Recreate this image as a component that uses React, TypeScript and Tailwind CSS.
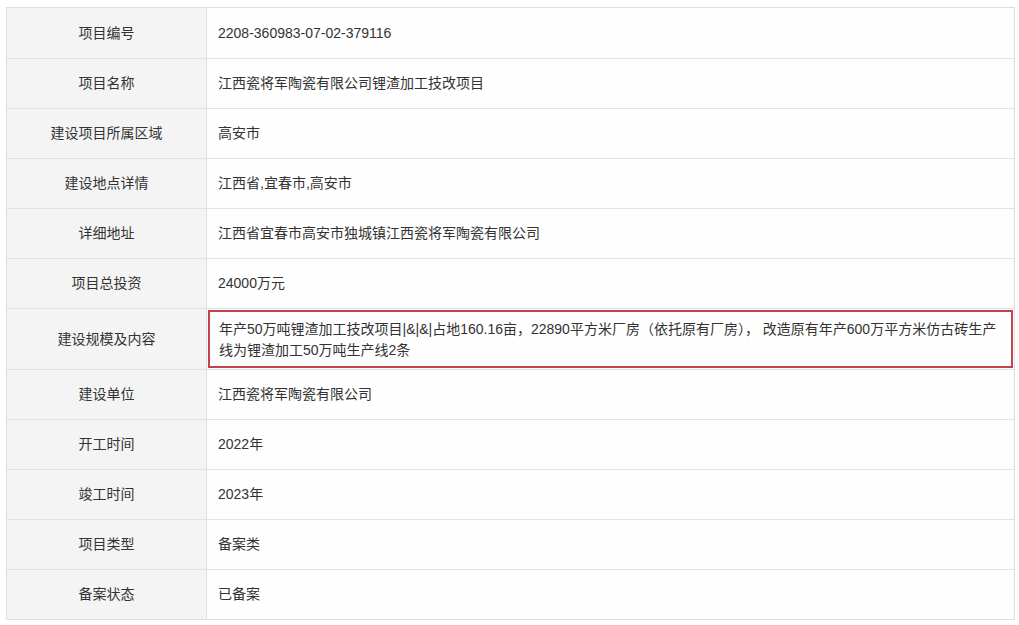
import React from 'react';

interface Row {
  label: string;
  value: string[];
  highlight?: boolean;
}

const rows: Row[] = [
  { label: '项目编号', value: ['2208-360983-07-02-379116'] },
  { label: '项目名称', value: ['江西瓷将军陶瓷有限公司锂渣加工技改项目'] },
  { label: '建设项目所属区域', value: ['高安市'] },
  { label: '建设地点详情', value: ['江西省,宜春市,高安市'] },
  { label: '详细地址', value: ['江西省宜春市高安市独城镇江西瓷将军陶瓷有限公司'] },
  { label: '项目总投资', value: ['24000万元'] },
  {
    label: '建设规模及内容',
    value: [
      '年产50万吨锂渣加工技改项目|&|&|占地160.16亩，22890平方米厂房（依托原有厂房）， 改造原有年产600万平方米仿古砖生产',
      '线为锂渣加工50万吨生产线2条',
    ],
    highlight: true,
  },
  { label: '建设单位', value: ['江西瓷将军陶瓷有限公司'] },
  { label: '开工时间', value: ['2022年'] },
  { label: '竣工时间', value: ['2023年'] },
  { label: '项目类型', value: ['备案类'] },
  { label: '备案状态', value: ['已备案'] },
];

const App: React.FC = () => {
  return (
    <div
      className="w-[1019px] h-[625px] bg-white pt-[7px] pl-[6px]"
      style={{ fontFamily: '"Liberation Sans", "Noto Sans CJK SC", sans-serif' }}
    >
      <div className="w-[1009px] border border-[#dedede] text-[14px] text-[#333]">
        {rows.map((row, i) => (
          <div
            key={row.label}
            className={`grid grid-cols-[200px_1fr] ${i > 0 ? 'border-t border-[#e3e3e3]' : ''} ${
              row.highlight ? 'h-[61px]' : 'h-[50px]'
            }`}
          >
            <div className="flex items-center justify-center bg-[#f4f4f4] border-r border-[#dedede]">
              {row.label}
            </div>
            {row.highlight ? (
              <div className="bg-[#fefefe] p-[1px]">
                <div className="h-full border-[2px] border-[#c0454b] pl-[9px] pr-[4px] pt-[7px] leading-[21px] whitespace-nowrap">
                  {row.value.map((line) => (
                    <div key={line}>{line}</div>
                  ))}
                </div>
              </div>
            ) : (
              <div className="flex items-center pl-[11px] bg-[#fefefe]">{row.value[0]}</div>
            )}
          </div>
        ))}
      </div>
    </div>
  );
};

export default App;
